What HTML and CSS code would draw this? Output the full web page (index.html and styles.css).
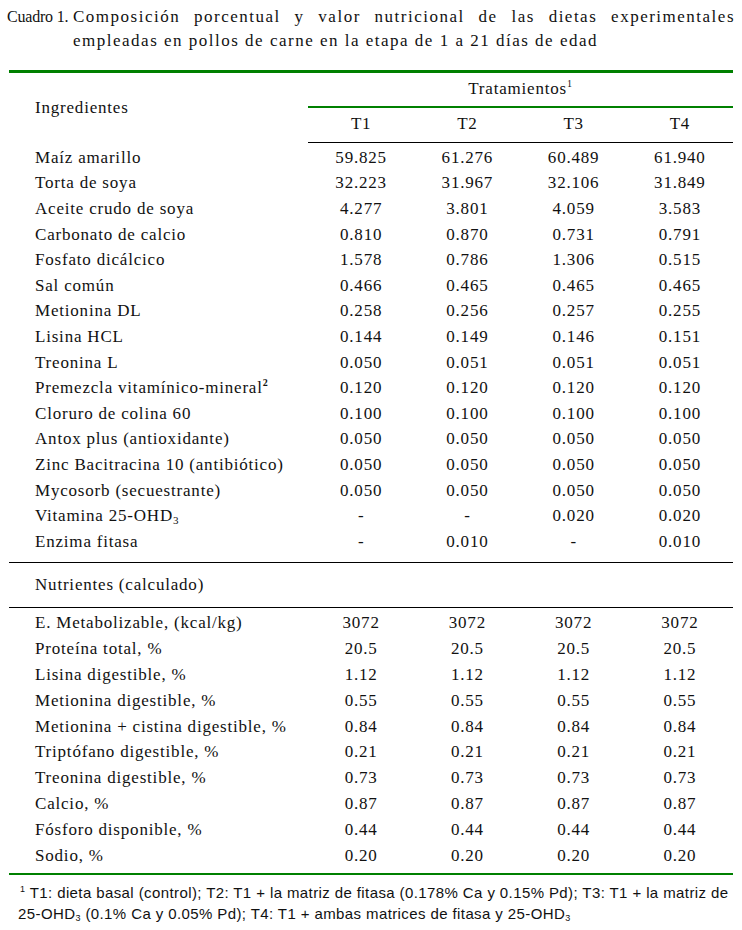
FILE: index.html
```html
<!DOCTYPE html>
<html lang="es">
<head>
<meta charset="utf-8">
<title>Cuadro 1</title>
<link rel="stylesheet" href="styles.css">
</head>
<body>
<div class="page">
  <div class="caption">
    <span class="cap-label">Cuadro 1.</span>
    <p class="cap-text"><span class="cap-l1">Composición porcentual y valor nutricional de las dietas experimentales</span><span class="cap-l2">empleadas en pollos de carne en la etapa de 1 a 21 días de edad</span></p>
  </div>

  <table class="diet">
    <colgroup>
      <col class="c-lbl"><col class="c-num"><col class="c-num"><col class="c-num"><col class="c-num">
    </colgroup>
    <thead>
      <tr class="h1">
        <th class="lbl" rowspan="2">Ingredientes</th>
        <th class="trat" colspan="4">Tratamientos<sup>1</sup></th>
      </tr>
      <tr class="h2">
        <th>T1</th><th>T2</th><th>T3</th><th>T4</th>
      </tr>
    </thead>
    <tbody class="ingr">
      <tr><td>Maíz amarillo</td><td>59.825</td><td>61.276</td><td>60.489</td><td>61.940</td></tr>
      <tr><td>Torta de soya</td><td>32.223</td><td>31.967</td><td>32.106</td><td>31.849</td></tr>
      <tr><td>Aceite crudo de soya</td><td>4.277</td><td>3.801</td><td>4.059</td><td>3.583</td></tr>
      <tr><td>Carbonato de calcio</td><td>0.810</td><td>0.870</td><td>0.731</td><td>0.791</td></tr>
      <tr><td>Fosfato dicálcico</td><td>1.578</td><td>0.786</td><td>1.306</td><td>0.515</td></tr>
      <tr><td>Sal común</td><td>0.466</td><td>0.465</td><td>0.465</td><td>0.465</td></tr>
      <tr><td>Metionina DL</td><td>0.258</td><td>0.256</td><td>0.257</td><td>0.255</td></tr>
      <tr><td>Lisina HCL</td><td>0.144</td><td>0.149</td><td>0.146</td><td>0.151</td></tr>
      <tr><td>Treonina L</td><td>0.050</td><td>0.051</td><td>0.051</td><td>0.051</td></tr>
      <tr><td>Premezcla vitamínico-mineral<sup class="b">2</sup></td><td>0.120</td><td>0.120</td><td>0.120</td><td>0.120</td></tr>
      <tr><td>Cloruro de colina 60</td><td>0.100</td><td>0.100</td><td>0.100</td><td>0.100</td></tr>
      <tr><td>Antox plus (antioxidante)</td><td>0.050</td><td>0.050</td><td>0.050</td><td>0.050</td></tr>
      <tr><td>Zinc Bacitracina 10 (antibiótico)</td><td>0.050</td><td>0.050</td><td>0.050</td><td>0.050</td></tr>
      <tr><td>Mycosorb (secuestrante)</td><td>0.050</td><td>0.050</td><td>0.050</td><td>0.050</td></tr>
      <tr><td>Vitamina 25-OHD<sub>3</sub></td><td>-</td><td>-</td><td>0.020</td><td>0.020</td></tr>
      <tr><td>Enzima fitasa</td><td>-</td><td>0.010</td><td>-</td><td>0.010</td></tr>
    </tbody>
    <tbody class="sect">
      <tr><td colspan="5">Nutrientes (calculado)</td></tr>
    </tbody>
    <tbody class="nutr">
      <tr><td>E. Metabolizable, (kcal/kg)</td><td>3072</td><td>3072</td><td>3072</td><td>3072</td></tr>
      <tr><td>Proteína total, %</td><td>20.5</td><td>20.5</td><td>20.5</td><td>20.5</td></tr>
      <tr><td>Lisina digestible, %</td><td>1.12</td><td>1.12</td><td>1.12</td><td>1.12</td></tr>
      <tr><td>Metionina digestible, %</td><td>0.55</td><td>0.55</td><td>0.55</td><td>0.55</td></tr>
      <tr><td>Metionina + cistina digestible, %</td><td>0.84</td><td>0.84</td><td>0.84</td><td>0.84</td></tr>
      <tr><td>Triptófano digestible, %</td><td>0.21</td><td>0.21</td><td>0.21</td><td>0.21</td></tr>
      <tr><td>Treonina digestible, %</td><td>0.73</td><td>0.73</td><td>0.73</td><td>0.73</td></tr>
      <tr><td>Calcio, %</td><td>0.87</td><td>0.87</td><td>0.87</td><td>0.87</td></tr>
      <tr><td>Fósforo disponible, %</td><td>0.44</td><td>0.44</td><td>0.44</td><td>0.44</td></tr>
      <tr><td>Sodio, %</td><td>0.20</td><td>0.20</td><td>0.20</td><td>0.20</td></tr>
    </tbody>
  </table>

  <p class="note"><sup>1</sup> T1: dieta basal (control); T2: T1 + la matriz de fitasa (0.178% Ca y 0.15% Pd); T3: T1 + la matriz de 25-OHD<sub>3</sub> (0.1% Ca y 0.05% Pd); T4: T1 + ambas matrices de fitasa y 25-OHD<sub>3</sub></p>
</div>
</body>
</html>
```

FILE: styles.css
```css
html, body {
  margin: 0;
  padding: 0;
  background: #ffffff;
}

.page {
  width: 724px;
  padding: 5px 9px 0 9px;
  font-family: "Liberation Serif", "Times New Roman", serif;
  font-size: 17px;
  color: #111111;
}

.caption {
  display: flex;
  align-items: flex-start;
  margin-right: -2px;
  line-height: 24px;
  font-size: 16px;
}

.cap-label {
  flex: 0 0 66px;
  margin-left: -2px;
  white-space: nowrap;
  letter-spacing: -0.2px;
}

.cap-text {
  margin: 0;
  flex: 1;
  font-size: 17px;
  letter-spacing: 1.5px;
}

.cap-l1 {
  display: block;
  text-align: justify;
  text-align-last: justify;
}

.cap-l2 {
  display: block;
  text-align: left;
}

.diet {
  width: 724px;
  table-layout: fixed;
  margin-top: 17px;
  border-collapse: collapse;
  border-top: 3px solid #008000;
  border-bottom: 2px solid #008000;
  letter-spacing: 0.8px;
}

.c-lbl {
  width: 299px;
}

.c-num {
  width: 106.25px;
}

.diet th,
.diet td {
  padding: 0;
  font-weight: normal;
  text-align: center;
  vertical-align: middle;
  white-space: nowrap;
}

.diet th.lbl,
.diet td:first-child {
  text-align: left;
  padding-left: 26px;
}

.h1 th {
  height: 31px;
}

.h1 th.trat {
  border-bottom: 2px solid #008000;
  padding-bottom: 2px;
}

.h2 th {
  height: 31px;
  border-bottom: 1px solid #000;
  padding-bottom: 3px;
}

.diet sup {
  font-size: 10px;
  line-height: 0;
  vertical-align: 7px;
}

.diet sup.b {
  font-weight: bold;
}

.diet sub {
  font-size: 11px;
  line-height: 0;
  vertical-align: -3px;
}

.ingr td {
  height: 25.6px;
}

.ingr tr:first-child td {
  padding-top: 2px;
}

.ingr tr:last-child td {
  padding-bottom: 7px;
  border-bottom: 1px solid #000;
}

.sect td {
  height: 43px;
  padding-top: 1px;
  padding-bottom: 0;
  border-bottom: 1px solid #000;
}

.nutr td {
  height: 25.8px;
}

.nutr tr:first-child td {
  padding-top: 3px;
}

.nutr tr:last-child td {
  padding-bottom: 5px;
}

.note {
  margin: 7px 0 0 0;
  padding-left: 9px;
  text-indent: 2px;
  font-family: "Liberation Sans", Arial, sans-serif;
  font-size: 15px;
  letter-spacing: 0.4px;
  line-height: 21px;
  color: #111111;
}

.note sup {
  font-size: 9px;
  line-height: 0;
  vertical-align: 6px;
}

.note sub {
  font-size: 9px;
  line-height: 0;
  vertical-align: -2px;
}
```
